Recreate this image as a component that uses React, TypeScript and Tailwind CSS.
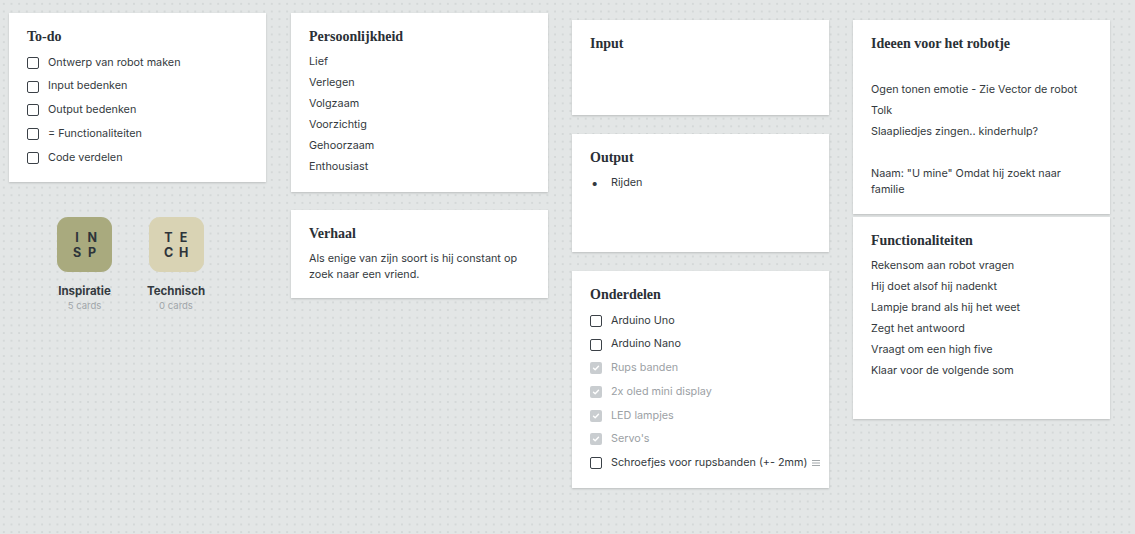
import React from 'react';

const sans = "font-['Inter','Liberation_Sans',sans-serif]";
const serif = "font-['Liberation_Serif','Times_New_Roman',serif]";

function Card({ title, className = '', tight, children }: { title: string; className?: string; tight?: boolean; children?: React.ReactNode }) {
    return (
        <div className={`bg-white w-[257px] shadow-[0_1px_2px_rgba(0,0,0,0.18)] px-[18px] pt-[16px] ${className}`}>
            <h3 className={`${serif} font-bold text-[14px] leading-[16px] text-[#2a3036] ${tight ? 'mb-[6px]' : 'mb-[9px]'}`}>{title}</h3>
            {children}
        </div>
    );
}

function Check({ checked }: { checked?: boolean }) {
    if (checked) {
        return (
            <span className="w-[12px] h-[12px] rounded-[2px] bg-[#c9cdd0] flex items-center justify-center shrink-0">
                <svg width="8" height="8" viewBox="0 0 8 8" fill="none" stroke="white" strokeWidth="1.4" strokeLinecap="round" strokeLinejoin="round">
                    <path d="M1.5 4.2 L3.2 5.8 L6.5 2.3" />
                </svg>
            </span>
        );
    }
    return <span className="w-[12px] h-[12px] rounded-[2px] border-[1.5px] border-[#3b4147] shrink-0" />;
}

function Todo({ items }: { items: { text: string; done?: boolean; handle?: boolean }[] }) {
    return (
        <div className="flex flex-col">
            {items.map((it) => (
                <div key={it.text} className="flex items-center h-[23.7px] gap-[9px] whitespace-nowrap">
                    <Check checked={it.done} />
                    <span className={`text-[10.8px] ${it.done ? 'text-[#9ca1a5]' : 'text-[#343a40]'}`}>{it.text}</span>
                    {it.handle && (
                        <svg width="8" height="8" viewBox="0 0 8 8" className="ml-[-4px] shrink-0" stroke="#a3a8ab" strokeWidth="1">
                            <path d="M0 1.5 H8 M0 4 H8 M0 6.5 H8" />
                        </svg>
                    )}
                </div>
            ))}
        </div>
    );
}

function Lines({ items }: { items: string[] }) {
    return (
        <div className="flex flex-col gap-[5px] text-[10.8px] leading-[16px] text-[#343a40]">
            {items.map((t, i) => (t === '' ? <div key={i} className="h-[16px]" /> : <p key={i}>{t}</p>))}
        </div>
    );
}

function Board({ letters, name, count, color }: { letters: [string, string][]; name: string; count: string; color: string }) {
    return (
        <div className="w-[80px] flex flex-col items-center">
            <div className={`w-[55px] h-[55px] rounded-[11px] ${color} flex flex-col items-center justify-center`}>
                {letters.map((row, i) => (
                    <div key={i} className="flex gap-[6px] text-[12.5px] leading-[15px] font-bold text-[#2e343a]">
                        <span className="w-[9px] text-center">{row[0]}</span>
                        <span className="w-[9px] text-center">{row[1]}</span>
                    </div>
                ))}
            </div>
            <div className="mt-[12px] text-[11.5px] font-bold text-[#343a40] leading-[14px]">{name}</div>
            <div className="mt-[2px] text-[9.5px] text-[#a0a5a9] leading-[12px]">{count}</div>
        </div>
    );
}

export default function App() {
    return (
        <div
            className={`${sans} w-[1135px] h-[534px] overflow-hidden bg-[#e3e6e6] bg-[radial-gradient(#d4d8d8_0.8px,transparent_0.9px)] bg-[size:7.67px_7.67px] flex pl-[9px] gap-[24px]`}
        >
            {/* kolom 1 */}
            <div className="flex flex-col pt-[13px] mr-[1px]">
                <Card title="To-do" className="h-[169px]" tight>
                    <Todo
                        items={[
                            { text: 'Ontwerp van robot maken' },
                            { text: 'Input bedenken' },
                            { text: 'Output bedenken' },
                            { text: '= Functionaliteiten' },
                            { text: 'Code verdelen' },
                        ]}
                    />
                </Card>
                <div className="flex gap-[11.5px] pl-[35.5px] mt-[35px]">
                    <Board letters={[['I', 'N'], ['S', 'P']]} name="Inspiratie" count="5 cards" color="bg-[#a9aa7e]" />
                    <Board letters={[['T', 'E'], ['C', 'H']]} name="Technisch" count="0 cards" color="bg-[#d9d3b4]" />
                </div>
            </div>

            {/* kolom 2 */}
            <div className="flex flex-col pt-[13px] gap-[18px]">
                <Card title="Persoonlijkheid" className="h-[179px]">
                    <Lines items={['Lief', 'Verlegen', 'Volgzaam', 'Voorzichtig', 'Gehoorzaam', 'Enthousiast']} />
                </Card>
                <Card title="Verhaal" className="h-[88px]">
                    <p className="text-[10.8px] leading-[15.5px] text-[#343a40]">Als enige van zijn soort is hij constant op zoek naar een vriend.</p>
                </Card>
            </div>

            {/* kolom 3 */}
            <div className="flex flex-col pt-[20px] gap-[19px]">
                <Card title="Input" className="h-[95px]" />
                <Card title="Output" className="h-[118px]">
                    <div className="flex items-center text-[10.8px] leading-[16px] text-[#343a40]">
                        <span className="w-[21px] pl-[1px] text-[13px] leading-[16px]">•</span>
                        <span>Rijden</span>
                    </div>
                </Card>
                <Card title="Onderdelen" className="h-[217px] pt-[16px]" tight>
                    <Todo
                        items={[
                            { text: 'Arduino Uno' },
                            { text: 'Arduino Nano' },
                            { text: 'Rups banden', done: true },
                            { text: '2x oled mini display', done: true },
                            { text: 'LED lampjes', done: true },
                            { text: "Servo's", done: true },
                            { text: 'Schroefjes voor rupsbanden (+- 2mm)', handle: true },
                        ]}
                    />
                </Card>
            </div>

            {/* kolom 4 */}
            <div className="flex flex-col pt-[20px] gap-[3px]">
                <Card title="Ideeen voor het robotje" className="h-[194px]">
                    <Lines
                        items={['', 'Ogen tonen emotie - Zie Vector de robot', 'Tolk', 'Slaapliedjes zingen.. kinderhulp?', '', 'Naam: "U mine" Omdat hij zoekt naar familie']}
                    />
                </Card>
                <Card title="Functionaliteiten" className="h-[202px]">
                    <Lines
                        items={[
                            'Rekensom aan robot vragen',
                            'Hij doet alsof hij nadenkt',
                            'Lampje brand als hij het weet',
                            'Zegt het antwoord',
                            'Vraagt om een high five',
                            'Klaar voor de volgende som',
                        ]}
                    />
                </Card>
            </div>
        </div>
    );
}
